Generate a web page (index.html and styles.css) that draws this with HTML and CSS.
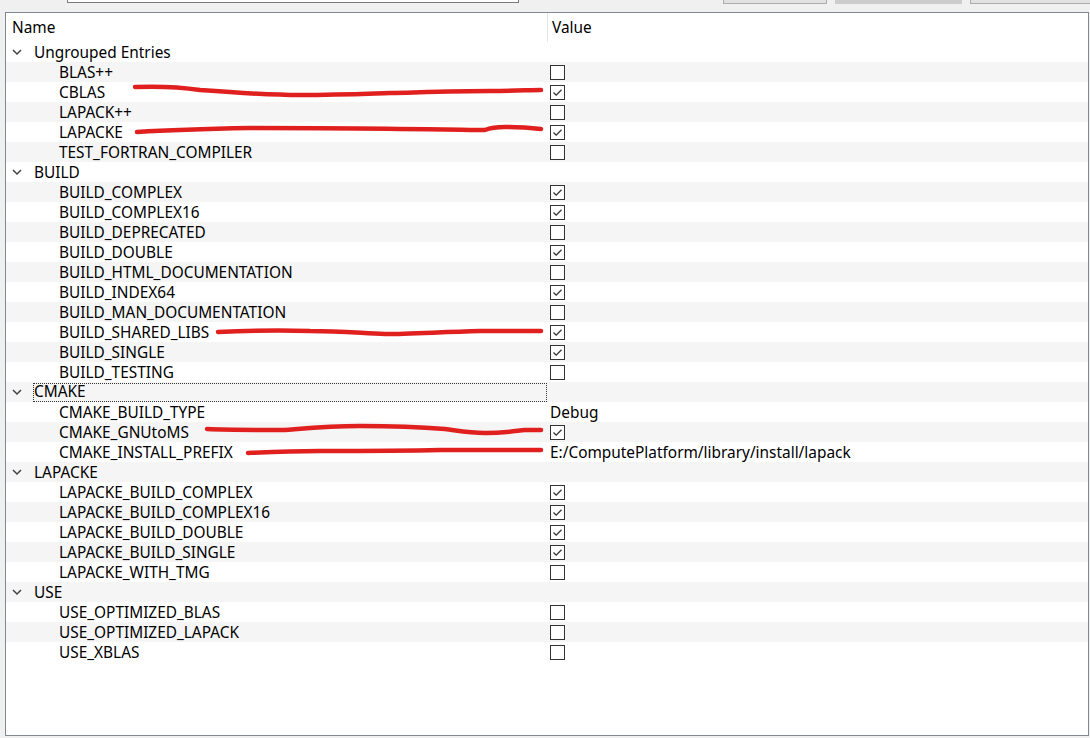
FILE: index.html
```html
<!DOCTYPE html>
<html>
<head>
<meta charset="utf-8">
<link rel="stylesheet" href="styles.css">
</head>
<body>
<div class="toolbar">
  <div class="search"></div>
  <div class="spacer"></div>
  <div class="btn"></div>
  <div class="btn btn-pressed"></div>
  <div class="btn btn-last"></div>
</div>
<div class="frame">
  <div class="header">
    <div class="col-name">Name</div>
    <div class="col-value">Value</div>
  </div>
  <div class="rows">
    <div class="row group"><span class="chev"><svg width="10" height="7" viewBox="0 0 10 7"><polyline points="1,1 5,5 9,1" fill="none" stroke="#444" stroke-width="1.5"/></svg></span><span class="name">Ungrouped Entries</span></div>
    <div class="row alt"><span class="name child">BLAS++</span><span class="val"><span class="cb"></span></span></div>
    <div class="row"><span class="name child">CBLAS</span><span class="val"><span class="cb on"><svg width="13" height="13" viewBox="0 0 13 13"><polyline points="2.5,6.5 5.2,9.2 10.5,3.8" fill="none" stroke="#333" stroke-width="1.3"/></svg></span></span></div>
    <div class="row alt"><span class="name child">LAPACK++</span><span class="val"><span class="cb"></span></span></div>
    <div class="row"><span class="name child">LAPACKE</span><span class="val"><span class="cb on"><svg width="13" height="13" viewBox="0 0 13 13"><polyline points="2.5,6.5 5.2,9.2 10.5,3.8" fill="none" stroke="#333" stroke-width="1.3"/></svg></span></span></div>
    <div class="row alt"><span class="name child">TEST_FORTRAN_COMPILER</span><span class="val"><span class="cb"></span></span></div>

    <div class="row group"><span class="chev"><svg width="10" height="7" viewBox="0 0 10 7"><polyline points="1,1 5,5 9,1" fill="none" stroke="#444" stroke-width="1.5"/></svg></span><span class="name">BUILD</span></div>
    <div class="row alt"><span class="name child">BUILD_COMPLEX</span><span class="val"><span class="cb on"><svg width="13" height="13" viewBox="0 0 13 13"><polyline points="2.5,6.5 5.2,9.2 10.5,3.8" fill="none" stroke="#333" stroke-width="1.3"/></svg></span></span></div>
    <div class="row"><span class="name child">BUILD_COMPLEX16</span><span class="val"><span class="cb on"><svg width="13" height="13" viewBox="0 0 13 13"><polyline points="2.5,6.5 5.2,9.2 10.5,3.8" fill="none" stroke="#333" stroke-width="1.3"/></svg></span></span></div>
    <div class="row alt"><span class="name child">BUILD_DEPRECATED</span><span class="val"><span class="cb"></span></span></div>
    <div class="row"><span class="name child">BUILD_DOUBLE</span><span class="val"><span class="cb on"><svg width="13" height="13" viewBox="0 0 13 13"><polyline points="2.5,6.5 5.2,9.2 10.5,3.8" fill="none" stroke="#333" stroke-width="1.3"/></svg></span></span></div>
    <div class="row alt"><span class="name child">BUILD_HTML_DOCUMENTATION</span><span class="val"><span class="cb"></span></span></div>
    <div class="row"><span class="name child">BUILD_INDEX64</span><span class="val"><span class="cb on"><svg width="13" height="13" viewBox="0 0 13 13"><polyline points="2.5,6.5 5.2,9.2 10.5,3.8" fill="none" stroke="#333" stroke-width="1.3"/></svg></span></span></div>
    <div class="row alt"><span class="name child">BUILD_MAN_DOCUMENTATION</span><span class="val"><span class="cb"></span></span></div>
    <div class="row"><span class="name child">BUILD_SHARED_LIBS</span><span class="val"><span class="cb on"><svg width="13" height="13" viewBox="0 0 13 13"><polyline points="2.5,6.5 5.2,9.2 10.5,3.8" fill="none" stroke="#333" stroke-width="1.3"/></svg></span></span></div>
    <div class="row alt"><span class="name child">BUILD_SINGLE</span><span class="val"><span class="cb on"><svg width="13" height="13" viewBox="0 0 13 13"><polyline points="2.5,6.5 5.2,9.2 10.5,3.8" fill="none" stroke="#333" stroke-width="1.3"/></svg></span></span></div>
    <div class="row"><span class="name child">BUILD_TESTING</span><span class="val"><span class="cb"></span></span></div>

    <div class="row group alt"><span class="chev"><svg width="10" height="7" viewBox="0 0 10 7"><polyline points="1,1 5,5 9,1" fill="none" stroke="#444" stroke-width="1.5"/></svg></span><span class="name focus">CMAKE</span></div>
    <div class="row"><span class="name child">CMAKE_BUILD_TYPE</span><span class="val text">Debug</span></div>
    <div class="row alt"><span class="name child">CMAKE_GNUtoMS</span><span class="val"><span class="cb on"><svg width="13" height="13" viewBox="0 0 13 13"><polyline points="2.5,6.5 5.2,9.2 10.5,3.8" fill="none" stroke="#333" stroke-width="1.3"/></svg></span></span></div>
    <div class="row"><span class="name child">CMAKE_INSTALL_PREFIX</span><span class="val text">E:/ComputePlatform/library/install/lapack</span></div>

    <div class="row group alt"><span class="chev"><svg width="10" height="7" viewBox="0 0 10 7"><polyline points="1,1 5,5 9,1" fill="none" stroke="#444" stroke-width="1.5"/></svg></span><span class="name">LAPACKE</span></div>
    <div class="row"><span class="name child">LAPACKE_BUILD_COMPLEX</span><span class="val"><span class="cb on"><svg width="13" height="13" viewBox="0 0 13 13"><polyline points="2.5,6.5 5.2,9.2 10.5,3.8" fill="none" stroke="#333" stroke-width="1.3"/></svg></span></span></div>
    <div class="row alt"><span class="name child">LAPACKE_BUILD_COMPLEX16</span><span class="val"><span class="cb on"><svg width="13" height="13" viewBox="0 0 13 13"><polyline points="2.5,6.5 5.2,9.2 10.5,3.8" fill="none" stroke="#333" stroke-width="1.3"/></svg></span></span></div>
    <div class="row"><span class="name child">LAPACKE_BUILD_DOUBLE</span><span class="val"><span class="cb on"><svg width="13" height="13" viewBox="0 0 13 13"><polyline points="2.5,6.5 5.2,9.2 10.5,3.8" fill="none" stroke="#333" stroke-width="1.3"/></svg></span></span></div>
    <div class="row alt"><span class="name child">LAPACKE_BUILD_SINGLE</span><span class="val"><span class="cb on"><svg width="13" height="13" viewBox="0 0 13 13"><polyline points="2.5,6.5 5.2,9.2 10.5,3.8" fill="none" stroke="#333" stroke-width="1.3"/></svg></span></span></div>
    <div class="row"><span class="name child">LAPACKE_WITH_TMG</span><span class="val"><span class="cb"></span></span></div>

    <div class="row group alt"><span class="chev"><svg width="10" height="7" viewBox="0 0 10 7"><polyline points="1,1 5,5 9,1" fill="none" stroke="#444" stroke-width="1.5"/></svg></span><span class="name">USE</span></div>
    <div class="row"><span class="name child">USE_OPTIMIZED_BLAS</span><span class="val"><span class="cb"></span></span></div>
    <div class="row alt"><span class="name child">USE_OPTIMIZED_LAPACK</span><span class="val"><span class="cb"></span></span></div>
    <div class="row"><span class="name child">USE_XBLAS</span><span class="val"><span class="cb"></span></span></div>
  </div>
</div>
<svg class="marks" width="1090" height="738" viewBox="0 0 1090 738">
  <g fill="none" stroke="#e0201f" stroke-width="4.5" stroke-linecap="round" stroke-linejoin="round">
    <path d="M135,87 C160,86 180,87 200,90 C240,93 270,95 300,95 C340,95 360,94 390,93 C430,92 460,91 490,91 C515,91 530,90 541,90"/>
    <path d="M137,132 C170,130 200,129 250,128 C300,128 350,128 400,129 C440,129 470,130 485,130 C490,128 495,127 505,127 C520,127 532,128 541,129"/>
    <path d="M218,332 C240,331 270,330 310,331 C340,331 360,333 385,334 C410,334 440,332 480,331 C505,331 525,331 541,331"/>
    <path d="M207,429 C230,430 260,430 285,430 C310,428 330,426 360,426 C390,426 420,427 445,429 C460,431 470,433 485,433 C505,433 515,431 525,430 C533,430 538,430 541,430"/>
    <path d="M248,453 C270,452 290,451 320,451 C360,451 400,451 440,450 C480,450 515,450 541,450"/>
  </g>
</svg>
</body>
</html>
```
FILE: styles.css
```css
html, body {
  margin: 0;
  padding: 0;
  background: #f0f0f0;
  width: 1090px;
  height: 738px;
  overflow: hidden;
  font-family: "Noto Sans", "Open Sans", sans-serif;
  font-size: 15.4px;
  color: #000;
  position: relative;
}

.toolbar {
  height: 4px;
  display: flex;
  align-items: flex-end;
  overflow: hidden;
}

.search {
  margin-left: 67px;
  width: 450px;
  height: 20px;
  background: #fff;
  border: 1px solid #7a7a7a;
  margin-bottom: 1px;
}

.spacer {
  flex: 1;
}

.btn {
  width: 102px;
  height: 20px;
  border: 1px solid #adadad;
  background: #e1e1e1;
  margin-right: 8px;
}

.btn-pressed {
  width: 125px;
  background: #cccccc;
  border-color: #cccccc;
}

.btn-last {
  width: 120px;
  margin-right: -2px;
}

.frame {
  margin: 8px 1px 0 5px;
  height: 724px;
  border: 1px solid #828790;
  background: #fff;
  box-sizing: border-box;
}

.header {
  display: flex;
  height: 29px;
  align-items: center;
}

.col-name {
  width: 535px;
  padding-left: 6px;
  height: 100%;
  display: flex;
  align-items: center;
  border-right: 1px solid #e5e5e5;
}

.col-value {
  padding-left: 4px;
}

.rows {
  display: flex;
  flex-direction: column;
}

.row {
  height: 20px;
  display: flex;
  align-items: center;
  line-height: 20px;
}

.row .name {
  padding-top: 1px;
}

.row.alt {
  background: #f5f5f5;
}

.chev {
  width: 28px;
  padding-left: 6px;
  box-sizing: border-box;
  display: flex;
  align-items: center;
}

.chev svg {
  display: block;
}

.name {
  white-space: nowrap;
}

.name.child {
  width: 544px;
  padding-left: 53px;
  box-sizing: border-box;
}

.name.focus {
  width: 514px;
  height: 19px;
  line-height: 18px;
  padding-top: 0;
  outline: 1px dotted #333;
  outline-offset: -1px;
  padding-left: 1px;
  margin-left: -1px;
  box-sizing: border-box;
}

.val {
  display: flex;
  align-items: center;
}

.val.text {
  padding-top: 1px;
}

.cb {
  width: 15px;
  height: 15px;
  border: 1px solid #333;
  box-sizing: border-box;
  background: #fff;
  display: flex;
  align-items: center;
  justify-content: center;
}

.cb svg {
  display: block;
}

.marks {
  position: absolute;
  left: 0;
  top: 0;
  pointer-events: none;
}
```
